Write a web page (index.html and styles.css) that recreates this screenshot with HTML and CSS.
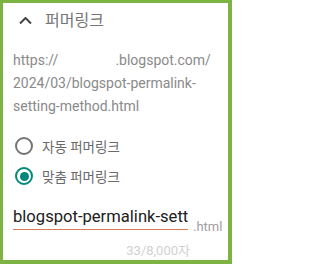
FILE: index.html
```html
<!DOCTYPE html>
<html lang="ko">
<head>
<meta charset="utf-8">
<link rel="stylesheet" href="styles.css">
</head>
<body>
<div class="card">
  <div class="header">
    <svg class="chev" width="13" height="7" viewBox="0 0 13 7"><path d="M1 6.5 L6.5 1 L12 6.5" fill="none" stroke="#424242" stroke-width="2"/></svg>
    <span class="title">퍼머링크</span>
  </div>
  <div class="url">https://<span class="blank"></span>.blogspot.com/<br>2024/03/blogspot-permalink-<br>setting-method.html</div>
  <div class="options">
    <div class="opt"><span class="radio"></span><span class="label">자동 퍼머링크</span></div>
    <div class="opt"><span class="radio checked"></span><span class="label">맞춤 퍼머링크</span></div>
  </div>
  <div class="field">
    <div class="input">blogspot-permalink-setting-method</div>
    <span class="suffix">.html</span>
  </div>
  <div class="counter">33/8,000자</div>
</div>
</body>
</html>
```
FILE: styles.css
```css
html, body {
  margin: 0;
  padding: 0;
  background: #fff;
}
body {
  font-family: Roboto, "Noto Sans CJK KR", sans-serif;
}
.card {
  box-sizing: border-box;
  width: 232px;
  height: 264px;
  border-style: solid;
  border-color: #7cb342;
  border-width: 3px 4px 4px 3px;
  background: #fff;
}
.header {
  height: 32px;
  display: flex;
  align-items: center;
  padding-left: 16px;
  gap: 13px;
}
.chev {
  display: block;
  flex: none;
  margin-top: 2px;
}
.title {
  font-size: 16px;
  color: #757575;
}
.url {
  margin-top: 14px;
  padding-left: 10px;
  font-size: 14px;
  line-height: 23px;
  color: #8a8a8a;
  white-space: nowrap;
}
.blank {
  display: inline-block;
  width: 57px;
}
.options {
  margin-top: 13px;
  padding-left: 12px;
}
.opt {
  height: 30px;
  display: flex;
  align-items: center;
  gap: 9px;
}
.radio {
  box-sizing: border-box;
  flex: none;
  width: 18px;
  height: 18px;
  border: 2px solid #757575;
  border-radius: 50%;
  display: flex;
  align-items: center;
  justify-content: center;
}
.radio.checked {
  border-color: #00897b;
}
.radio.checked::after {
  content: "";
  width: 9px;
  height: 9px;
  border-radius: 50%;
  background: #00897b;
}
.label {
  font-size: 13.5px;
  color: #6a6a6a;
}
.field {
  margin-top: 16px;
  padding-left: 10px;
  display: flex;
  align-items: flex-end;
}
.input {
  flex: none;
  width: 175px;
  overflow: hidden;
  white-space: nowrap;
  font-size: 16.6px;
  line-height: 20px;
  color: #202020;
  padding-bottom: 2px;
  border-bottom: 1px solid #d77a5a;
}
.suffix {
  margin-left: 5px;
  font-size: 13px;
  line-height: 15px;
  color: #9e9e9e;
  margin-bottom: -4px;
}
.counter {
  margin-top: 13px;
  width: 187px;
  text-align: right;
  font-size: 13px;
  line-height: 15px;
  color: #d0d0d0;
}
```
